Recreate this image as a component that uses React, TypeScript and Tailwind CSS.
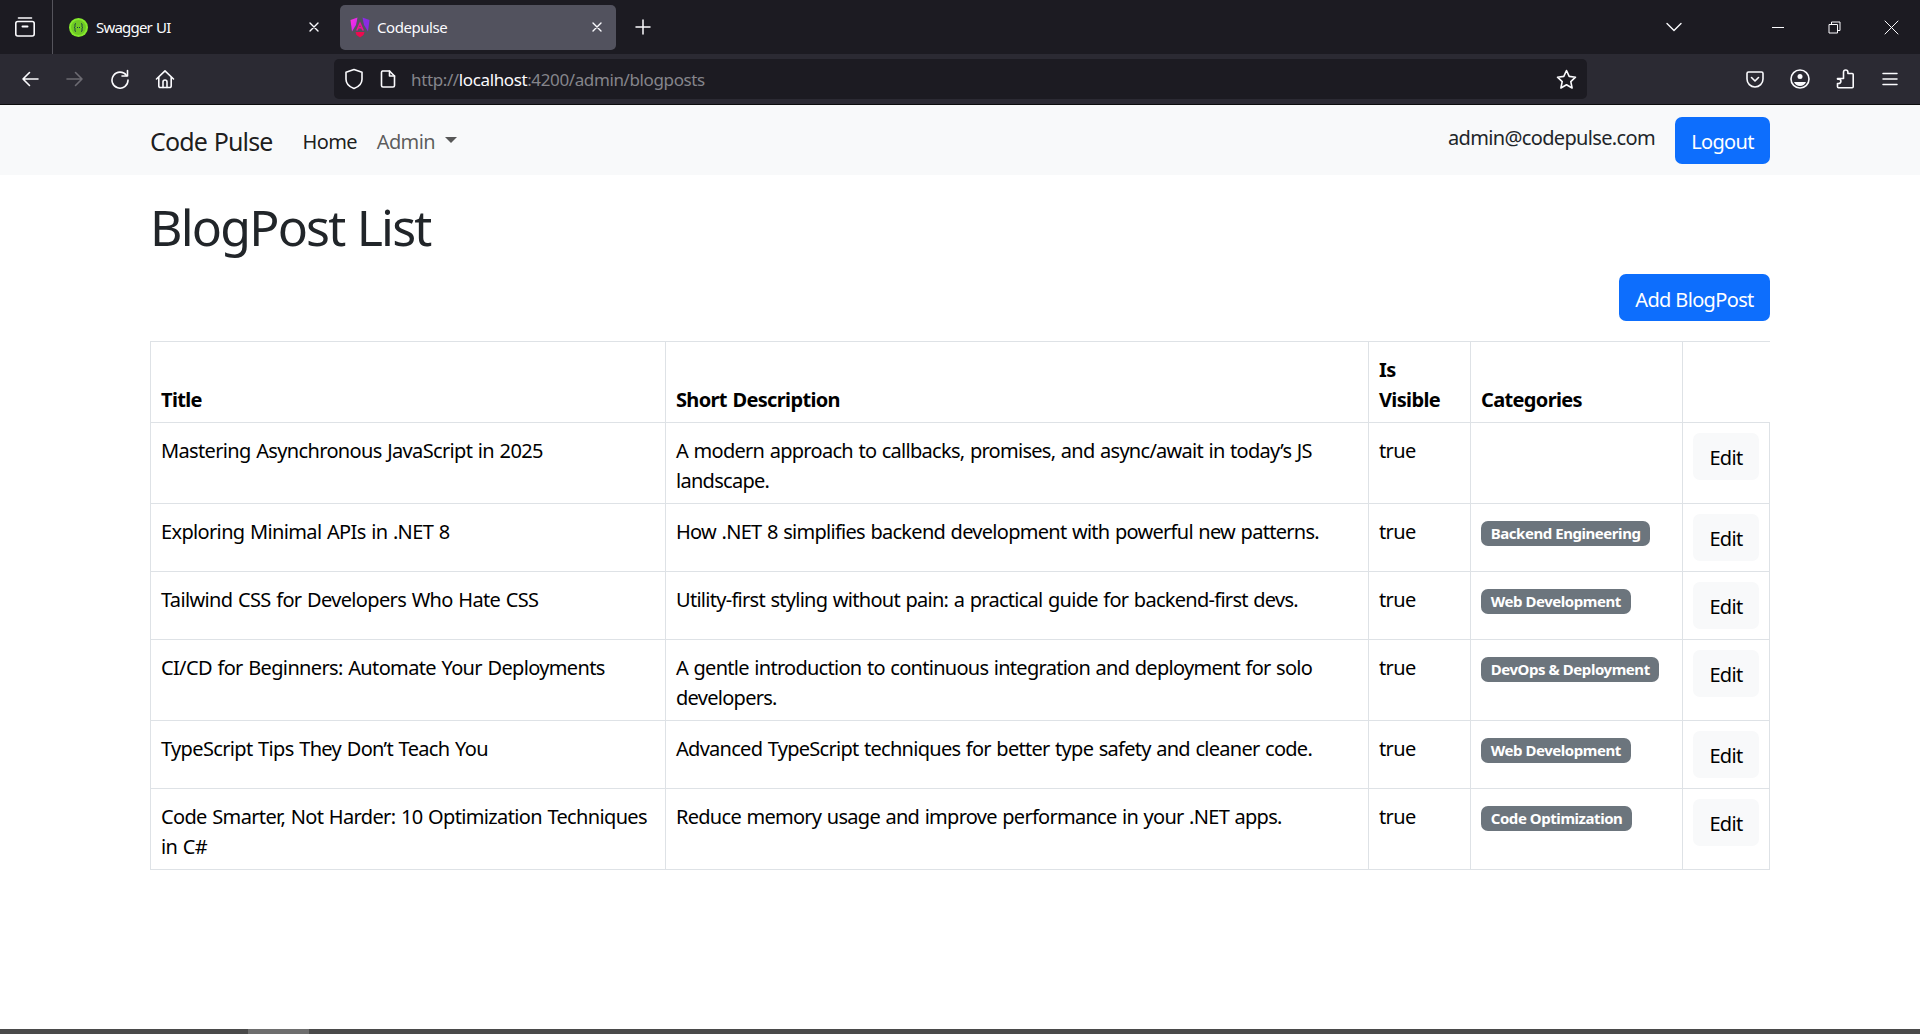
import React from "react";

const S = ({ children, w = 20, h = 20, vb = "0 0 20 20", c = "text-[#fbfbfe]" }: any) => (
  <svg width={w} height={h} viewBox={vb} fill="none" stroke="currentColor" strokeWidth="1.6" strokeLinecap="round" strokeLinejoin="round" className={c}>
    {children}
  </svg>
);

const rows = [
  ["Mastering Asynchronous JavaScript in 2025", "A modern approach to callbacks, promises, and async/await in today’s JS landscape.", ""],
  ["Exploring Minimal APIs in .NET 8", "How .NET 8 simplifies backend development with powerful new patterns.", "Backend Engineering"],
  ["Tailwind CSS for Developers Who Hate CSS", "Utility-first styling without pain: a practical guide for backend-first devs.", "Web Development"],
  ["CI/CD for Beginners: Automate Your Deployments", "A gentle introduction to continuous integration and deployment for solo developers.", "DevOps & Deployment"],
  ["TypeScript Tips They Don’t Teach You", "Advanced TypeScript techniques for better type safety and cleaner code.", "Web Development"],
  ["Code Smarter, Not Harder: 10 Optimization Techniques in C#", "Reduce memory usage and improve performance in your .NET apps.", "Code Optimization"],
];

const ToolBtn = ({ children }: any) => <div className="w-[45px] h-[40px] flex items-center justify-center shrink-0">{children}</div>;

function TabBar() {
  return (
    <div className="h-[54px] bg-[#1c1b22] flex items-center text-[#fbfbfe] text-[15px] tracking-[-0.45px]">
      <div className="w-[53px] h-[54px] flex items-center justify-center border-r border-[#55545c] shrink-0 pr-[3px]">
        <S w={22} h={22} vb="0 0 22 22">
          <path d="M4.5 2h13" />
          <rect x="1.8" y="5.5" width="18.4" height="14.5" rx="2" />
          <path d="M8.5 10.5h5" strokeWidth="2" />
        </S>
      </div>
      <div className="w-[287px] flex items-center pl-[16px] pr-[19px] shrink-0">
        <svg width="19" height="19" viewBox="0 0 19 19" className="shrink-0">
          <circle cx="9.5" cy="9.5" r="9.5" fill="#85ea2d" />
          <circle cx="9.5" cy="9.5" r="7.5" fill="#6fc924" />
          <path d="M7 5.500c-1.500 0-1 2-1 3s-.8 1-.8 1 .8 0 .8 1-.5 3 1 3M12 5.500c1.500 0 1 2 1 3s.8 1 .8 1-.8 0-.8 1 .5 3-1 3" fill="none" stroke="#173647" strokeWidth="1" />
          <path d="M8 9.500h3" stroke="#173647" strokeWidth="1.200" strokeDasharray="1 1" />
        </svg>
        <span className="ml-[8px] flex-1 tracking-[-0.8px]">Swagger UI</span>
        <S w={14} h={14} vb="0 0 14 14"><path d="M3 3l8 8M11 3l-8 8" strokeWidth="1.4" /></S>
      </div>
      <div className="w-[276px] h-[45px] bg-[#52525e] rounded-[5px] flex items-center pl-[10px] pr-[12px] shrink-0">
        <svg width="20" height="21" viewBox="0 0 20 21" className="shrink-0">
          <defs>
            <linearGradient id="ng2" x1="0" y1="0" x2="1" y2="1">
              <stop offset="0" stopColor="#ff31d9" />
              <stop offset="1" stopColor="#c923ff" />
            </linearGradient>
          </defs>
          <path d="M7.500 0.500L.5 3l1.500 11.500 4-6.500z" fill="url(#ng2)" />
          <path d="M12.500 0.500L19.500 3 18 14.500 14 8z" fill="#8a2be2" />
          <path d="M10 4.500l-4 9h1.800l.9-2h2.600l.9 2H14z M9.200 10L10 8l.8 2z" fill="#f0109a" fillRule="evenodd" />
          <path d="M5.500 15h9l-1 3-3.500 2.500L6.500 18z" fill="#ee0a50" />
        </svg>
        <span className="ml-[7px] flex-1">Codepulse</span>
        <S w={14} h={14} vb="0 0 14 14"><path d="M3 3l8 8M11 3l-8 8" strokeWidth="1.4" /></S>
      </div>
      <div className="w-[54px] flex items-center justify-center shrink-0">
        <S w={16} h={16} vb="0 0 16 16"><path d="M8 1v14M1 8h14" strokeWidth="1.5" /></S>
      </div>
      <div className="flex-1" />
      <div className="w-[46px] flex items-center justify-center shrink-0">
        <S w={16} h={10} vb="0 0 16 10"><path d="M1 1.500l7 7 7-7" strokeWidth="1.4" /></S>
      </div>
      <div className="w-[52px]" />
      <div className="w-[57px] flex items-center justify-center shrink-0">
        <div className="w-[12px] h-[1px] bg-[#fbfbfe]" />
      </div>
      <div className="w-[57px] flex items-center justify-center shrink-0">
        <S w={13} h={13} vb="0 0 13 13"><path d="M1 3.500h8.500V12H1zM3.500 3.500V1H12v8.500H9.500" strokeWidth="1" strokeLinecap="butt" strokeLinejoin="miter" /></S>
      </div>
      <div className="w-[57px] flex items-center justify-center shrink-0">
        <S w={15} h={15} vb="0 0 15 15"><path d="M1 1l13 13M14 1L1 14" strokeWidth="1" /></S>
      </div>
    </div>
  );
}

function ToolBar() {
  return (
    <div className="h-[50px] bg-[#2b2a33] flex items-center pl-[7px] pr-[8px]">
      <ToolBtn><S><path d="M18 10H3M9.500 3.500L3 10l6.500 6.500" /></S></ToolBtn>
      <ToolBtn><S c="text-[#6c6b72]"><path d="M2 10h15M10.500 3.500L17 10l-6.500 6.500" /></S></ToolBtn>
      <ToolBtn><S><path d="M16.500 6.500A8 8 0 1 0 18 11" /><path d="M17.500 1.500v5.500H12" /></S></ToolBtn>
      <ToolBtn><S><path d="M1.500 10L10 1.800 18.500 10" /><path d="M3.800 8.500V17a1.500 1.500 0 0 0 1.500 1.500h9.400a1.500 1.500 0 0 0 1.500-1.500V8.500" /><path d="M8 18.500V13a2 2 0 0 1 4 0v5.500" /></S></ToolBtn>
      <div className="w-[147px]" />
      <div className="w-[1253px] h-[40px] bg-[#1c1b22] rounded-[5px] flex items-center shrink-0">
        <div className="w-[40px] flex justify-center shrink-0">
          <S w={20} h={22} vb="0 0 20 22"><path d="M10 1.500L2 4.200v7c0 4.500 4 7.800 8 9.300 4-1.500 8-4.800 8-9.300v-7z" /></S>
        </div>
        <div className="w-[28px] flex justify-center shrink-0">
          <S w={16} h={18} vb="0 0 16 18"><path d="M2.500 1h7l5 5v9.500a1.500 1.500 0 0 1-1.500 1.500H3a1.500 1.500 0 0 1-1.500-1.500v-13A1.500 1.500 0 0 1 2.500 1z" /><path d="M9.500 1v5h5" /></S>
        </div>
        <div className="ml-[9px] mt-[2px] text-[17px] tracking-[-0.38px] text-[#85858b] flex-1">
          http://<span className="text-[#fbfbfe]">localhost</span>:4200/admin/blogposts
        </div>
        <div className="w-[40px] mr-[1px] flex justify-center shrink-0">
          <S w={21} h={21} vb="0 0 21 21"><path d="M10.500 1.500l2.700 5.900 6.300.8-4.700 4.400 1.300 6.400-5.600-3.200-5.600 3.200 1.300-6.400-4.700-4.400 6.300-.8z" /></S>
        </div>
      </div>
      <div className="flex-1" />
      <ToolBtn><S w={18} h={17} vb="0 0 18 17"><path d="M2.500 1h13A1.500 1.500 0 0 1 17 2.500V8a8 8 0 0 1-16 0V2.500A1.500 1.500 0 0 1 2.500 1z" /><path d="M5.500 6.500L9 10l3.500-3.500" /></S></ToolBtn>
      <ToolBtn><S><circle cx="10" cy="10" r="9" /><circle cx="10" cy="7.500" r="2.500" fill="currentColor" stroke="none" /><path d="M4 13h12c-1 2.500-3.500 4-6 4s-5-1.500-6-4z" fill="currentColor" stroke="none" /></S></ToolBtn>
      <ToolBtn><S><path d="M8.500 4.500V3.200a2.200 2.200 0 0 1 4.400 0v1.300h4.300a1 1 0 0 1 1 1v12.300a1 1 0 0 1-1 1H3.500a1 1 0 0 1-1-1v-3.300h1.200a2.200 2.200 0 0 0 0-4.400H2.500V9.500h6z" /></S></ToolBtn>
      <ToolBtn><S w={16} h={14} vb="0 0 16 14"><path d="M1 1.500h14M1 7h14M1 12.500h14" strokeWidth="1.5" /></S></ToolBtn>
    </div>
  );
}

export default function App() {
  const th = "border border-[#dee2e6] px-[10px] pt-[13px] pb-[7px] text-left align-bottom font-bold";
  const td = "border border-[#dee2e6] px-[10px] pt-[13px] pb-[7px] align-top";
  const btd = "border border-[#dee2e6] px-[10px] py-[10px] align-top";
  return (
    <div className="h-[1034px] flex flex-col bg-white overflow-hidden text-[20px] leading-[30px] tracking-[-0.65px] [word-spacing:1px] font-['Noto_Sans','Open_Sans',sans-serif]">
      <div className="border-b border-[#0c0c0d]">
        <TabBar />
        <ToolBar />
      </div>
      <nav className="h-[70px] bg-[#f8f9fa] shrink-0">
        <div className="mx-[150px] h-full flex items-center">
          <span className="text-[25px] text-black/90 mr-[30px] mt-[2px] tracking-[-0.85px]">Code Pulse</span>
          <span className="text-black/90 mr-[20px] mt-[3px]">Home</span>
          <span className="text-black/65 mt-[3px]">Admin</span>
          <span className="ml-[10px] w-0 h-0 border-x-[6px] border-x-transparent border-t-[6px] border-t-black/65" />
          <span className="ml-auto text-[#212529] mr-[20px] mb-[5px]">admin@codepulse.com</span>
          <button className="h-[47px] w-[95px] rounded-[7px] bg-[#0d6efd] text-white pt-[3px]">Logout</button>
        </div>
      </nav>
      <main className="mx-[150px] flex-1 flex flex-col">
        <h1 className="mt-[22px] text-[50px] leading-[60px] text-[#212529] font-normal tracking-[-1.8px]">BlogPost List</h1>
        <div className="flex justify-end mt-[17px]">
          <button className="h-[47px] w-[151px] rounded-[7px] bg-[#0d6efd] text-white pt-[4px]">Add BlogPost</button>
        </div>
        <table className="mt-[20px] w-[1619px] table-fixed border-collapse text-black">
          <colgroup>
            <col className="w-[515px]" />
            <col className="w-[703px]" />
            <col className="w-[102px]" />
            <col className="w-[212px]" />
            <col className="w-[87px]" />
          </colgroup>
          <thead>
            <tr>
              <th className={th}>Title</th>
              <th className={th}>Short Description</th>
              <th className={th}>Is Visible</th>
              <th className={th}>Categories</th>
              <th className={`${th} border-r-0`}></th>
            </tr>
          </thead>
          <tbody>
            {rows.map((r) => (
              <tr key={r[0]}>
                <td className={td}>{r[0]}</td>
                <td className={`${td} tracking-[-0.72px]`}>{r[1]}</td>
                <td className={td}>true</td>
                <td className={td}>
                  {r[2] && (
                    <span className="inline-block bg-[#6c757d] text-white text-[15px] leading-[15px] font-bold px-[9.75px] py-[5.25px] rounded-[7px] tracking-[-0.45px] [word-spacing:0px] align-baseline">
                      {r[2]}
                    </span>
                  )}
                </td>
                <td className={btd}>
                  <button className="h-[47px] w-[66px] rounded-[7px] bg-[#f8f9fa] text-black block pt-[3px]">Edit</button>
                </td>
              </tr>
            ))}
          </tbody>
        </table>
      </main>
      <div className="h-[5px] bg-[#4a4a4a] shrink-0 flex">
        <div className="ml-[248px] w-[61px] bg-[#6e6e6e]" />
      </div>
    </div>
  );
}
